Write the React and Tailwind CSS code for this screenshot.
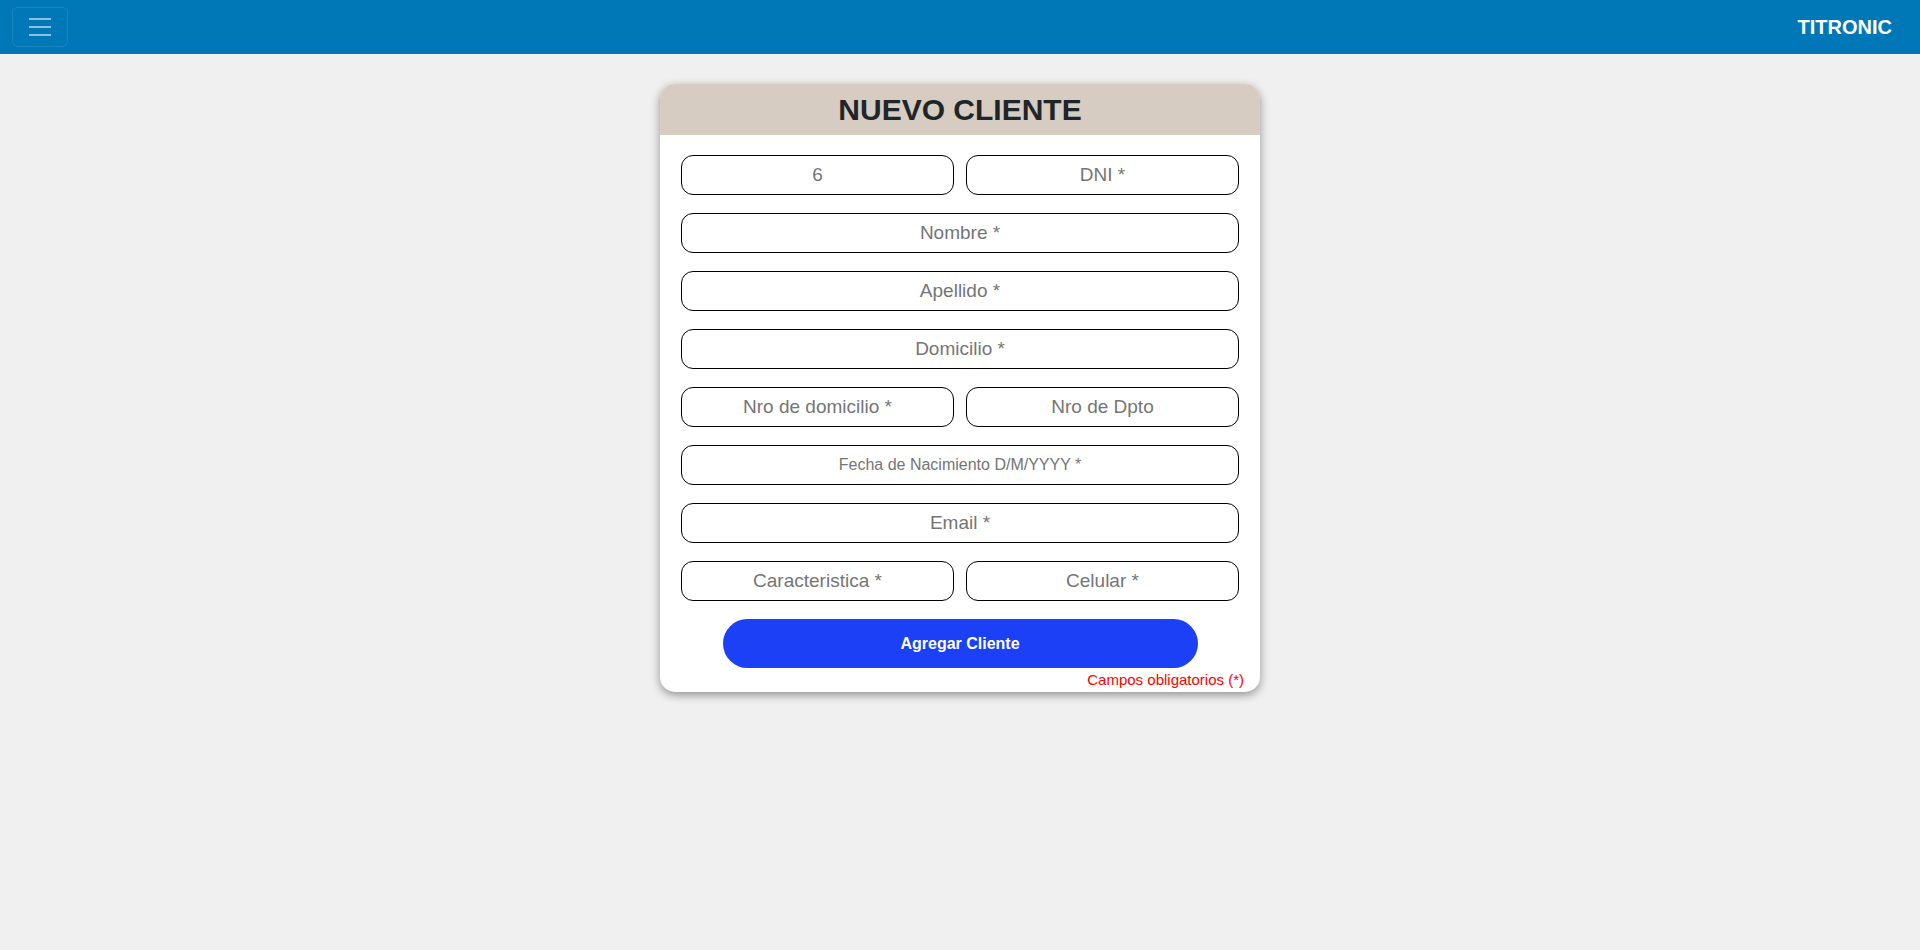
const rows = [
  ['6', 'DNI *'],
  ['Nombre *'],
  ['Apellido *'],
  ['Domicilio *'],
  ['Nro de domicilio *', 'Nro de Dpto'],
  ['Fecha de Nacimiento D/M/YYYY *'],
  ['Email *'],
  ['Caracteristica *', 'Celular *'],
];

function Field({ placeholder }) {
  const small = placeholder.startsWith('Fecha');
  return (
    <input
      type="text"
      placeholder={placeholder}
      className={`h-[40px] w-full min-w-0 flex-1 rounded-xl border border-black bg-white px-3 text-center text-[#212529] placeholder:text-[#757575] outline-none ${small ? 'text-[16px]' : 'text-[19px]'}`}
    />
  );
}

export default function App() {
  return (
    <div className="min-h-[950px] bg-[#f0f0f0] font-['Liberation_Sans',Arial,sans-serif]">
      {/* Navbar */}
      <nav className="flex h-[54px] items-center justify-between bg-[#0077b6] pl-[12px] pr-[28px]">
        <button className="flex h-[40px] w-[56px] items-center justify-center rounded-md border border-white/10">
          <svg width="30" height="30" viewBox="0 0 30 30">
            <path
              d="M4 7h22M4 15h22M4 23h22"
              stroke="rgba(255,255,255,0.55)"
              strokeWidth="2"
            />
          </svg>
        </button>
        <span className="text-[20px] font-bold text-white">TITRONIC</span>
      </nav>

      {/* Card */}
      <div className="mx-auto mt-[30px] w-[600px] overflow-hidden rounded-[15px] bg-white shadow-[0_3px_10px_rgba(0,0,0,0.4)]">
        <div className="flex h-[51px] items-center justify-center bg-[#d6ccc2]">
          <h1 className="text-[30px] font-bold leading-none text-[#212529]">NUEVO CLIENTE</h1>
        </div>

        <form className="flex flex-col gap-[18px] px-[21px] pt-[20px]">
          {rows.map((row, i) => (
            <div key={i} className="flex gap-[12px]">
              {row.map((p) => (
                <Field key={p} placeholder={p} />
              ))}
            </div>
          ))}
          <button
            type="button"
            className="mx-auto h-[49px] w-[475px] rounded-full bg-[#1b40f5] text-[16px] font-bold text-white"
          >
            Agregar Cliente
          </button>
        </form>
        <p className="pb-[4px] pr-[16px] pt-[3px] text-right text-[15px] leading-[17px] text-[#ff0000]">
          Campos obligatorios (*)
        </p>
      </div>
    </div>
  );
}
